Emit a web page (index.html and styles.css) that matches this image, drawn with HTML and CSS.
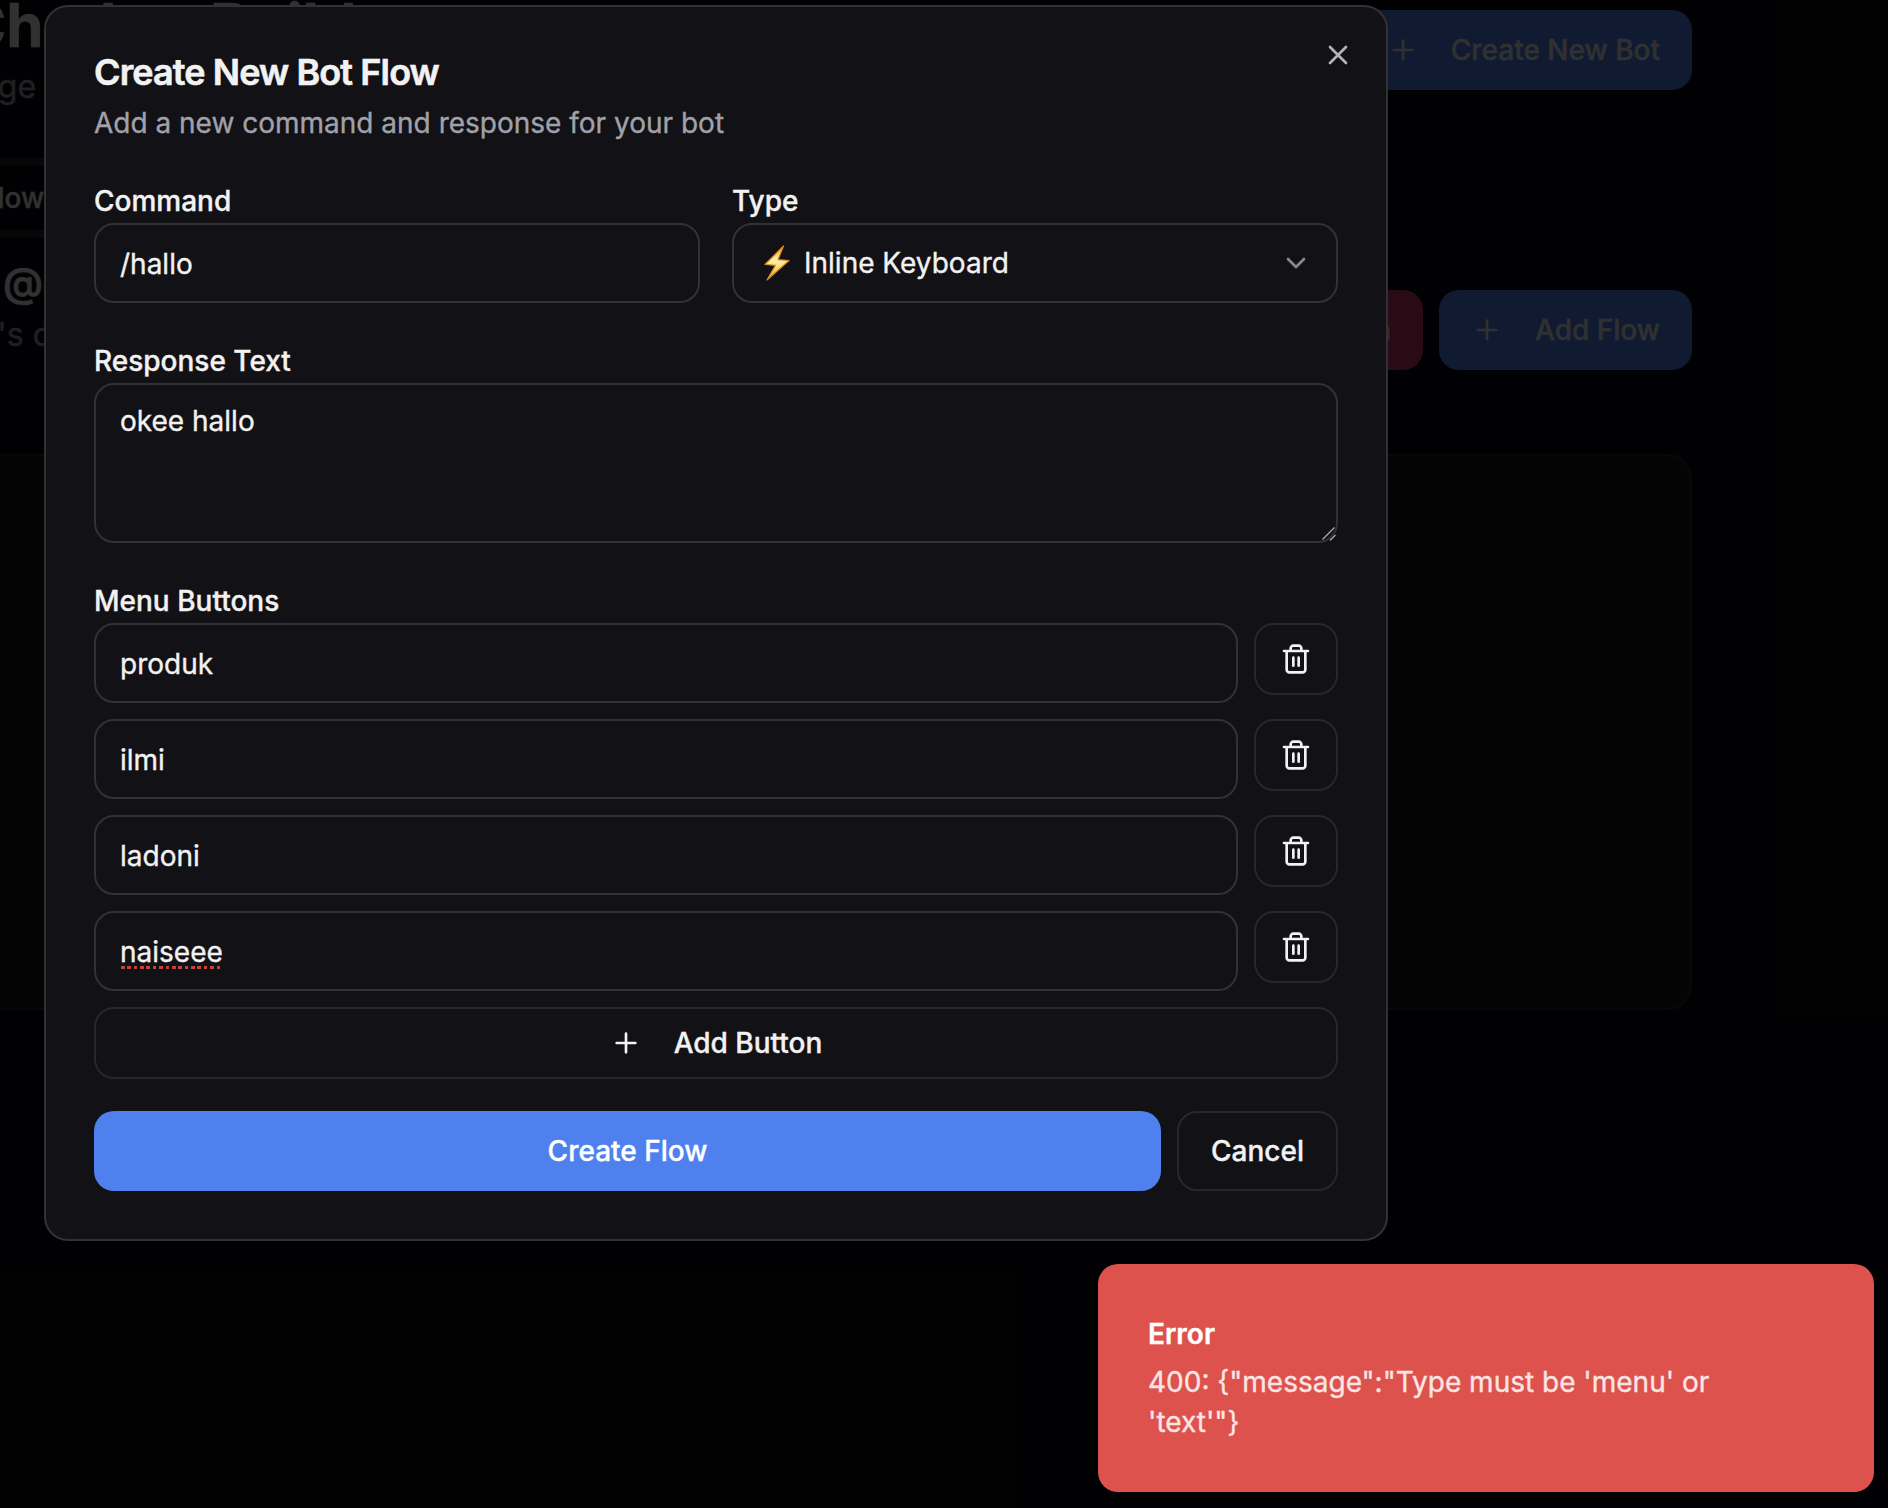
FILE: index.html
```html
<!DOCTYPE html>
<html lang="en">
<head>
<meta charset="utf-8">
<title>Chatbot Builder</title>
<link rel="stylesheet" href="styles.css">
</head>
<body>
<svg class="sprite" aria-hidden="true">
  <symbol id="plus" viewBox="0 0 24 24"><path d="M5 12h14M12 5v14"/></symbol>
  <symbol id="close" viewBox="0 0 24 24"><path d="M18 6 6 18M6 6l12 12"/></symbol>
  <symbol id="chevron" viewBox="0 0 24 24"><path d="m6 9 6 6 6-6"/></symbol>
  <symbol id="trash" viewBox="0 0 24 24"><path d="M3 6h18M19 6v14c0 1-1 2-2 2H7c-1 0-2-1-2-2V6M8 6V4c0-1 1-2 2-2h4c1 0 2 1 2 2v2M10 11v6M14 11v6"/></symbol>
</svg>

<main class="page">
  <header class="page-head">
    <div>
      <h1 class="page-title">Chatbot Builder</h1>
      <p class="page-sub">Manage</p>
    </div>
    <button class="btn btn-primary"><svg class="icon"><use href="#plus"/></svg>Create New Bot</button>
  </header>
  <div class="tabs"><span class="tab">Flows</span></div>
  <section class="flow-head">
    <div>
      <h2 class="flow-title">@</h2>
      <p class="flow-sub">bot's c</p>
    </div>
    <div class="flow-actions">
      <button class="btn btn-danger">Main</button>
      <button class="btn btn-primary"><svg class="icon"><use href="#plus"/></svg>Add Flow</button>
    </div>
  </section>
  <div class="panel"></div>
</main>

<div class="overlay"></div>

<form class="dialog">
  <button type="button" class="close"><svg class="icon"><use href="#close"/></svg></button>
  <h2 class="dialog-title">Create New Bot Flow</h2>
  <p class="dialog-sub">Add a new command and response for your bot</p>

  <div class="columns">
    <div class="field">
      <label class="label">Command</label>
      <div class="input">/hallo</div>
    </div>
    <div class="field">
      <label class="label">Type</label>
      <div class="input select">
        <svg class="bolt" viewBox="0 0 26 36">
          <defs><linearGradient id="bolt-fill" x1="0" y1="0" x2="0" y2="1"><stop offset="0" stop-color="#f5a82b"/><stop offset=".4" stop-color="#fff0b0"/><stop offset=".6" stop-color="#ffdf7a"/><stop offset="1" stop-color="#f09a1f"/></linearGradient></defs>
          <path d="M19.500 1 1 19.500l10.500.8L3 35 25 15.500l-11-.8z" fill="url(#bolt-fill)" stroke="#d98a1e" stroke-width="1.200" stroke-linejoin="round"/>
        </svg>
        <span>Inline Keyboard</span>
        <svg class="icon chevron"><use href="#chevron"/></svg>
      </div>
    </div>
  </div>

  <div class="field">
    <label class="label">Response Text</label>
    <div class="input textarea">okee hallo
      <svg class="grip" viewBox="0 0 14 14"><path d="M.5 12.500 12.500.5M8 13.500l5.500-5.500"/></svg>
    </div>
  </div>

  <div class="field">
    <label class="label">Menu Buttons</label>
    <div class="menu-list">
      <div class="menu-row"><div class="input">produk</div><button type="button" class="btn btn-outline btn-trash"><svg class="icon"><use href="#trash"/></svg></button></div>
      <div class="menu-row"><div class="input">ilmi</div><button type="button" class="btn btn-outline btn-trash"><svg class="icon"><use href="#trash"/></svg></button></div>
      <div class="menu-row"><div class="input">ladoni</div><button type="button" class="btn btn-outline btn-trash"><svg class="icon"><use href="#trash"/></svg></button></div>
      <div class="menu-row"><div class="input"><span class="misspelled">naiseee</span></div><button type="button" class="btn btn-outline btn-trash"><svg class="icon"><use href="#trash"/></svg></button></div>
      <button type="button" class="btn btn-outline btn-add"><svg class="icon"><use href="#plus"/></svg>Add Button</button>
    </div>
  </div>

  <div class="actions">
    <button type="button" class="btn btn-primary btn-submit">Create Flow</button>
    <button type="button" class="btn btn-outline btn-cancel">Cancel</button>
  </div>
</form>

<div class="toast">
  <div class="toast-title">Error</div>
  <div class="toast-text">400: {"message":"Type must be 'menu' or 'text'"}</div>
</div>
</body>
</html>
```
FILE: styles.css
```css
* { box-sizing: border-box; }
body {
  margin: 0;
  height: 1508px;
  position: relative;
  overflow: hidden;
  background: #09090f;
  color: #f2f2f2;
  font: 400 28px/40px Inter, "Liberation Sans", sans-serif;
  -webkit-text-stroke: .35px;
}
h1, h2, p { margin: 0; }
.sprite { position: absolute; width: 0; height: 0; }
.icon {
  width: 32px;
  height: 32px;
  flex: none;
  fill: none;
  stroke: currentColor;
  stroke-width: 2;
  stroke-linecap: round;
  stroke-linejoin: round;
}

/* Page behind the dialog */
.page { width: 1692px; padding-top: 10px; }
.page-head { display: flex; justify-content: space-between; height: 148px; }
.page-title {
  margin: -21px 0 0 -38px;
  font-size: 60px;
  line-height: 72px;
  font-weight: 700;
  letter-spacing: -.2px;
}
.page-sub { margin: 2px 0 0 -86px; font-size: 32px; line-height: 48px; color: #a1a1aa; }
.tabs {
  height: 80px;
  width: 400px;
  border: solid #27272a;
  border-width: 8px 0;
  background: #09090f;
  display: flex;
  align-items: center;
}
.tab { margin-left: -19px; font-weight: 500; }
.flow-head { display: flex; justify-content: space-between; margin-top: 52px; height: 164px; }
.flow-title { margin: -27px 0 0 3px; font-size: 40px; line-height: 40px; font-weight: 600; }
.flow-sub { margin: 8px 0 0 -52px; font-size: 32px; line-height: 48px; color: #a1a1aa; }
.flow-actions { display: flex; gap: 16px; }
.panel {
  margin-left: -40px;
  height: 556px;
  border: 2px solid #27272a;
  border-radius: 24px;
  background: #141414;
}
.overlay { position: absolute; inset: 0; background: rgba(0, 0, 0, .8); }

.btn {
  display: flex;
  align-items: center;
  justify-content: center;
  height: 80px;
  padding: 0 32px;
  border: 0;
  border-radius: 20px;
  color: #f2f2f2;
  font: 500 28px/40px Inter, "Liberation Sans", sans-serif;
  -webkit-text-stroke: .35px;
  white-space: nowrap;
}
.btn-primary { background: #4e81ee; color: #fff; }
.page .btn-primary { background: #5086f5; color: #f0f0f0; }
.page .icon { margin-right: 32px; }
.btn-danger { background: #d03a68; }
.btn-outline { background: transparent; border: 2px solid #27272c; }

/* Dialog */
.dialog {
  position: absolute;
  left: 44px;
  top: 5px;
  width: 1344px;
  height: 1236px;
  padding: 47px 48px 46px;
  border: 2px solid #313136;
  border-radius: 24px;
  background: #121116;
}
.close {
  position: absolute;
  right: 32px;
  top: 32px;
  width: 32px;
  height: 32px;
  padding: 0;
  border: 0;
  background: none;
  color: #b4b4b6;
}
.close .icon { display: block; }
.dialog-title { font-size: 36px; line-height: 36px; font-weight: 600; letter-spacing: -.9px; -webkit-text-stroke: .6px; }
.dialog-sub { margin-top: 13px; color: #a1a1aa; }
.columns { display: grid; grid-template-columns: 1fr 1fr; gap: 32px; margin-top: 40px; }
.field { margin-bottom: 40px; }
.columns .field { margin-bottom: 0; }
.columns + .field { margin-top: 40px; }
.label { display: block; height: 40px; line-height: 36px; font-weight: 500; }
.input {
  display: flex;
  align-items: center;
  height: 80px;
  padding: 2px 24px 0;
  border: 2px solid #313136;
  border-radius: 20px;
}
.select { padding: 0 24px 0 30px; }
.bolt { width: 26px; height: 36px; margin-right: 14px; }
.chevron { margin-left: auto; color: #89898b; }
.textarea { position: relative; height: 160px; align-items: flex-start; padding-top: 16px; }
.grip { position: absolute; right: 0; bottom: 0; width: 14px; height: 14px; stroke: #aaa; fill: none; stroke-width: 1.3; }
.menu-list { display: grid; gap: 16px; }
.menu-row { display: flex; gap: 16px; }
.menu-row .input { flex: 1; }
.btn-trash { width: 84px; height: 72px; padding: 0; }
.btn-add { height: 72px; }
.btn-add .icon { margin-right: 32px; }
.misspelled { position: relative; }
.misspelled::after {
  content: "";
  position: absolute;
  left: 1px;
  right: 0;
  top: 34px;
  height: 3px;
  background: repeating-linear-gradient(90deg, #c2443c 0 3.6px, transparent 3.6px 6.37px);
}
.actions { display: flex; gap: 16px; margin-top: -8px; }
.btn-submit { flex: 1; }

.toast {
  position: absolute;
  right: 14px;
  bottom: 16px;
  width: 776px;
  height: 228px;
  padding: 50px 100px 0 50px;
  border-radius: 20px;
  background: #dd524c;
  color: #fff;
}
.toast-title { font-weight: 600; }
.toast-text { margin-top: 8px; color: #fbe5e4; }
```
